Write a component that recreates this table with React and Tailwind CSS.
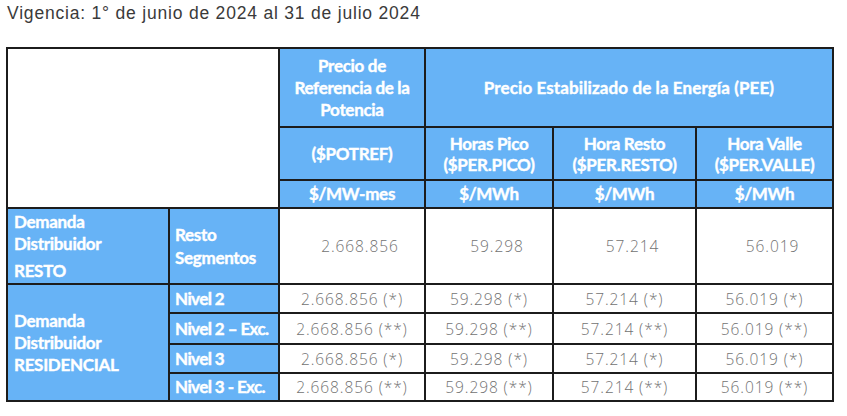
import React from "react";

const head = "bg-[#67b3f6] text-white font-bold text-center border-2 border-[#1c1c1c] [-webkit-text-stroke:0.4px_#fff]";
const side = "bg-[#67b3f6] text-white font-bold text-left align-middle border-2 border-[#1c1c1c] [-webkit-text-stroke:0.4px_#fff]";
const cell = "bg-white text-[#727272] font-light text-center border-2 border-[#1c1c1c]";

const rows = [
  { label: "Nivel 2", mark: "(*)", h: "h-[29px]" },
  { label: "Nivel 2 – Exc.", mark: "(**)", h: "h-[31px]" },
  { label: "Nivel 3", mark: "(*)", h: "h-[29px]" },
  { label: "Nivel 3 - Exc.", mark: "(**)", h: "h-[28px]" },
];

const values = ["2.668.856", "59.298", "57.214", "56.019"];

export default function App() {
  return (
    <div className="w-[847px] h-[416px] bg-white overflow-hidden">
      <p className="pl-[7px] pt-[3px] text-[17.5px] leading-[20px] text-[#3a3a3a] tracking-[0.8px] font-['Liberation_Sans',Arial,sans-serif]">
        Vigencia: 1° de junio de 2024 al 31 de julio 2024
      </p>

      <table className="ml-[6px] mt-[24px] w-[826px] table-fixed border-collapse font-['Lato','Open_Sans',sans-serif] text-[17px] leading-[20px] tracking-[-0.3px]">
        <colgroup>
          <col className="w-[162px]" />
          <col className="w-[110px]" />
          <col className="w-[146px]" />
          <col className="w-[128px]" />
          <col className="w-[143px]" />
          <col className="w-[137px]" />
        </colgroup>
        <tbody>
          <tr className="h-[79px]">
            <td colSpan={2} rowSpan={3} className="bg-white border-2 border-[#1c1c1c]"></td>
            <td className={`${head} px-[4px] leading-[22px]`}>
              Precio de
              <br />
              Referencia de la
              <br />
              Potencia
            </td>
            <td colSpan={3} className={`${head} tracking-[0.1px]`}>
              Precio Estabilizado de la Energía (PEE)
            </td>
          </tr>
          <tr className="h-[53px]">
            <td className={head}>($POTREF)</td>
            <td className={`${head} leading-[21px]`}>
              Horas Pico
              <br />
              ($PER.PICO)
            </td>
            <td className={`${head} leading-[21px]`}>
              Hora Resto
              <br />
              ($PER.RESTO)
            </td>
            <td className={`${head} leading-[21px]`}>
              Hora Valle
              <br />
              ($PER.VALLE)
            </td>
          </tr>
          <tr className="h-[28px]">
            <td className={head}>$/MW-mes</td>
            <td className={head}>$/MWh</td>
            <td className={head}>$/MWh</td>
            <td className={head}>$/MWh</td>
          </tr>

          <tr className="h-[76px]">
            <td className={`${side} pl-[6px]`}>
              <div className="leading-[22px]">Demanda</div>
              <div className="leading-[22px]">Distribuidor</div>
              <div className="leading-[22px] mt-[5px]">RESTO</div>
            </td>
            <td className={`${side} pl-[5px] leading-[23px]`}>
              Resto
              <br />
              Segmentos
            </td>
            {values.map((v) => (
              <td key={v} className={`${cell} pl-4 text-[15.5px] tracking-[0.9px] font-['Open_Sans',sans-serif]`}>
                {v}
              </td>
            ))}
          </tr>

          {rows.map((r, i) => (
            <tr key={r.label} className={r.h}>
              {i === 0 && (
                <td rowSpan={4} className={`${side} pl-[6px] leading-[22px]`}>
                  Demanda
                  <br />
                  Distribuidor
                  <br />
                  RESIDENCIAL
                </td>
              )}
              <td className={`${side} pl-[5px] tracking-[-0.6px] whitespace-nowrap`}>{r.label}</td>
              {values.map((v) => (
                <td key={v} className={`${cell} text-[15.5px] tracking-[0.9px] font-['Open_Sans',sans-serif]`}>
                  {v} {r.mark}
                </td>
              ))}
            </tr>
          ))}
        </tbody>
      </table>
    </div>
  );
}
